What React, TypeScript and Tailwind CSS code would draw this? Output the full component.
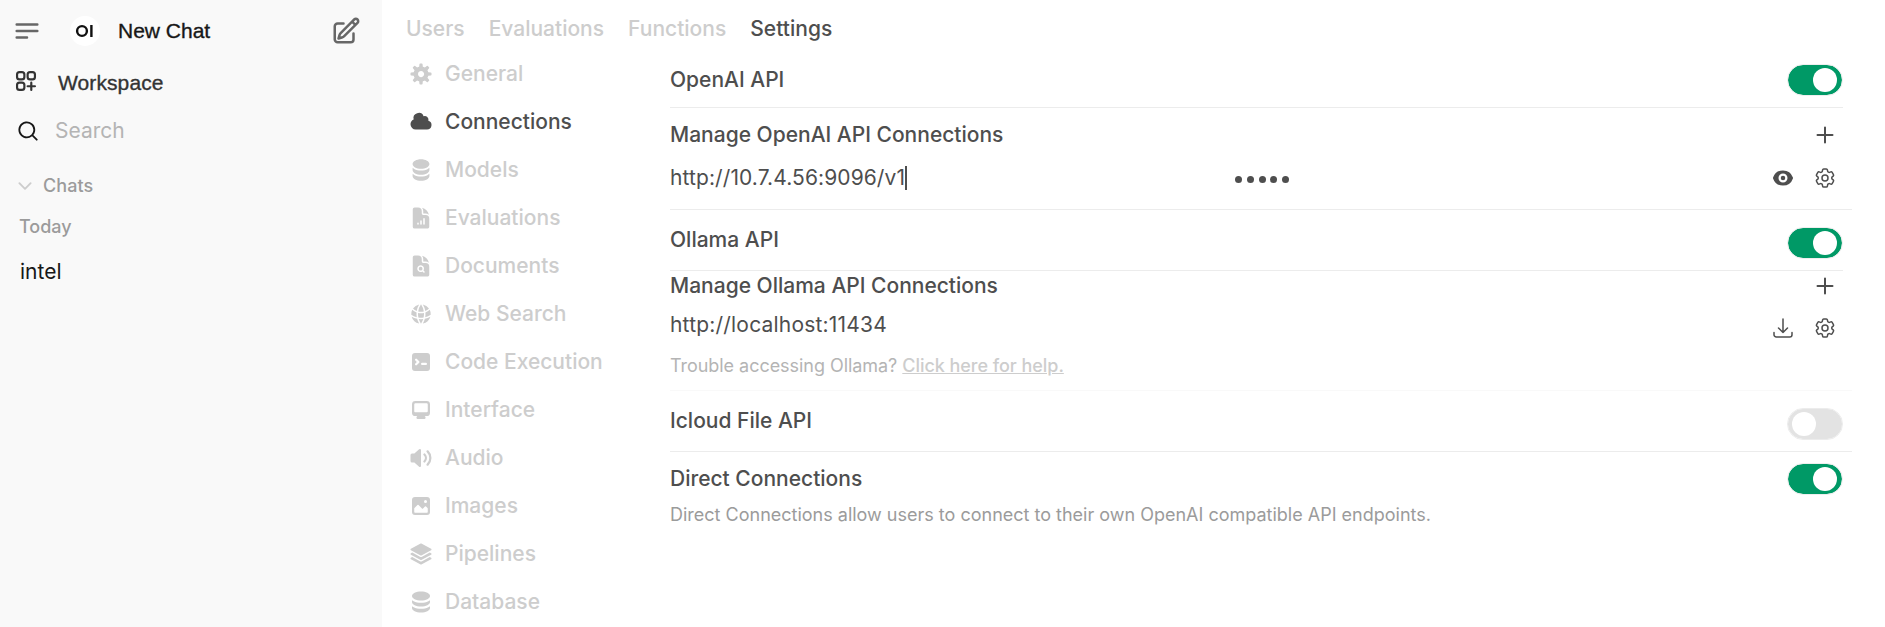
import type { ReactNode } from 'react';
import {
  HiDocumentChartBar,
  HiDocumentMagnifyingGlass,
  HiGlobeAlt,
  HiSquare3Stack3D,
  HiOutlineCog6Tooth,
  HiOutlineArrowDownTray,
} from 'react-icons/hi2';

function Solid({ box = 16, d }: { box?: number; d: string[] }) {
  return (
    <svg viewBox={`0 0 ${box} ${box}`} className="size-6 shrink-0" fill="currentColor">
      {d.map((p) => (
        <path key={p} d={p} fillRule="evenodd" clipRule="evenodd" />
      ))}
    </svg>
  );
}

function Line({ d, width, className }: { d: string; width: number; className: string }) {
  return (
    <svg
      viewBox="0 0 24 24"
      className={className}
      fill="none"
      stroke="currentColor"
      strokeWidth={width}
      strokeLinecap="round"
      strokeLinejoin="round"
    >
      <path d={d} />
    </svg>
  );
}

const gear = [
  'M6.955 1.45A.5.5 0 0 1 7.452 1h1.096a.5.5 0 0 1 .497.45l.17 1.699c.484.12.94.312 1.356.562l1.321-1.081a.5.5 0 0 1 .67.033l.774.775a.5.5 0 0 1 .034.67l-1.08 1.32c.25.417.44.873.561 1.357l1.699.17a.5.5 0 0 1 .45.497v1.096a.5.5 0 0 1-.45.497l-1.699.17c-.12.484-.312.94-.562 1.356l1.082 1.322a.5.5 0 0 1-.034.67l-.774.774a.5.5 0 0 1-.67.033l-1.322-1.08c-.416.25-.872.44-1.356.561l-.17 1.699a.5.5 0 0 1-.497.45H7.452a.5.5 0 0 1-.497-.45l-.17-1.699a4.973 4.973 0 0 1-1.356-.562L4.108 13.37a.5.5 0 0 1-.67-.033l-.774-.775a.5.5 0 0 1-.034-.67l1.08-1.32a4.971 4.971 0 0 1-.561-1.357l-1.699-.17A.5.5 0 0 1 1 8.548V7.452a.5.5 0 0 1 .45-.497l1.699-.17c.12-.484.312-.94.562-1.356L2.629 4.107a.5.5 0 0 1 .034-.67l.774-.774a.5.5 0 0 1 .67-.033L5.43 3.71a4.97 4.97 0 0 1 1.356-.561l.17-1.699ZM6 8c0 .538.212 1.026.558 1.385l.057.057a2 2 0 0 0 2.828-2.828l-.058-.056A2 2 0 0 0 6 8Z',
];
const cloud = [
  'M1 9.5A3.5 3.5 0 0 0 4.5 13H12a3 3 0 0 0 .917-5.857 2.503 2.503 0 0 0-3.198-3.019 3.5 3.5 0 0 0-6.628 2.171A3.5 3.5 0 0 0 1 9.5Z',
];
const stack20 = [
  'M10 1c3.866 0 7 1.79 7 4s-3.134 4-7 4-7-1.79-7-4 3.134-4 7-4zm5.694 8.13c.464-.264.91-.583 1.306-.952V10c0 2.21-3.134 4-7 4s-7-1.79-7-4V8.178c.396.37.842.688 1.306.953C5.838 10.006 7.854 10.5 10 10.5s4.162-.494 5.694-1.37zM3 13.179V15c0 2.21 3.134 4 7 4s7-1.79 7-4v-1.822c-.396.37-.842.688-1.306.953-1.532.875-3.548 1.369-5.694 1.369s-4.162-.494-5.694-1.37A7.009 7.009 0 013 13.179z',
];
const terminal = [
  'M2 4a2 2 0 0 1 2-2h8a2 2 0 0 1 2 2v8a2 2 0 0 1-2 2H4a2 2 0 0 1-2-2V4Zm2.22 1.97a.75.75 0 0 0 0 1.06l.97.97-.97.97a.75.75 0 1 0 1.06 1.06l1.5-1.5a.75.75 0 0 0 0-1.06l-1.5-1.5a.75.75 0 0 0-1.06 0ZM8.75 8.5a.75.75 0 0 0 0 1.5h2.5a.75.75 0 0 0 0-1.5h-2.5Z',
];
const desktop = [
  'M2 4.25A2.25 2.25 0 0 1 4.25 2h7.5A2.25 2.25 0 0 1 14 4.25v5.5A2.25 2.25 0 0 1 11.75 12h-1.312c.1.128.21.248.328.36a.75.75 0 0 1 .234.545v.345a.75.75 0 0 1-.75.75h-4.5a.75.75 0 0 1-.75-.75v-.345a.75.75 0 0 1 .234-.545c.118-.111.228-.232.328-.36H4.25A2.25 2.25 0 0 1 2 9.75v-5.5Zm2.25-.75a.75.75 0 0 0-.75.75v4.5c0 .414.336.75.75.75h7.5a.75.75 0 0 0 .75-.75v-4.5a.75.75 0 0 0-.75-.75h-7.5Z',
];
const speaker = [
  'M7.557 2.066A.75.75 0 0 1 8 2.75v10.5a.75.75 0 0 1-1.248.56L3.59 11H2a1 1 0 0 1-1-1V6a1 1 0 0 1 1-1h1.59l3.162-2.81a.75.75 0 0 1 .805-.124ZM12.95 3.05a.75.75 0 1 0-1.06 1.06 5.5 5.5 0 0 1 0 7.78.75.75 0 1 0 1.06 1.06 7 7 0 0 0 0-9.9Z',
  'M10.828 5.172a.75.75 0 1 0-1.06 1.06 2.5 2.5 0 0 1 0 3.536.75.75 0 1 0 1.06 1.06 4 4 0 0 0 0-5.656Z',
];
const photo = [
  'M2 4a2 2 0 0 1 2-2h8a2 2 0 0 1 2 2v8a2 2 0 0 1-2 2H4a2 2 0 0 1-2-2V4Zm10.5 5.707a.5.5 0 0 0-.146-.353l-1-1a.5.5 0 0 0-.708 0L9.354 9.646a.5.5 0 0 1-.708 0L6.354 7.354a.5.5 0 0 0-.708 0l-2 2a.5.5 0 0 0-.146.353V12a.5.5 0 0 0 .5.5h8a.5.5 0 0 0 .5-.5V9.707ZM12 5a1 1 0 1 1-2 0 1 1 0 0 1 2 0Z',
];
const stack16 = [
  'M8 7c3.314 0 6-1.343 6-3s-2.686-3-6-3-6 1.343-6 3 2.686 3 6 3Z',
  'M8 8.5c1.84 0 3.579-.37 4.914-1.037A6.33 6.33 0 0 0 14 6.78V8c0 1.657-2.686 3-6 3S2 9.657 2 8V6.78c.346.273.72.5 1.087.683C4.42 8.131 6.16 8.5 8 8.5Z',
  'M8 12.5c1.84 0 3.579-.37 4.914-1.037.366-.183.74-.41 1.086-.684V12c0 1.657-2.686 3-6 3s-6-1.343-6-3v-1.22c.346.273.72.5 1.087.683C4.42 12.131 6.16 12.5 8 12.5Z',
];
const eye = [
  'M8 9.5a1.5 1.5 0 1 0 0-3 1.5 1.5 0 0 0 0 3Z',
  'M1.38 8.28a.87.87 0 0 1 0-.566 7.003 7.003 0 0 1 13.238.006.87.87 0 0 1 0 .566A7.003 7.003 0 0 1 1.379 8.28ZM11 8a3 3 0 1 1-6 0 3 3 0 0 1 6 0Z',
];
const magnifier = [
  'M9 3.5a5.5 5.5 0 100 11 5.5 5.5 0 000-11zM2 9a7 7 0 1112.452 4.391l3.328 3.329a.75.75 0 11-1.06 1.06l-3.329-3.328A7 7 0 012 9z',
];

const sections: { label: string; icon: ReactNode }[] = [
  { label: 'General', icon: <Solid d={gear} /> },
  { label: 'Connections', icon: <Solid d={cloud} /> },
  { label: 'Models', icon: <Solid box={20} d={stack20} /> },
  { label: 'Evaluations', icon: <HiDocumentChartBar className="size-6" /> },
  { label: 'Documents', icon: <HiDocumentMagnifyingGlass className="size-6" /> },
  { label: 'Web Search', icon: <HiGlobeAlt className="size-6" /> },
  { label: 'Code Execution', icon: <Solid d={terminal} /> },
  { label: 'Interface', icon: <Solid d={desktop} /> },
  { label: 'Audio', icon: <Solid d={speaker} /> },
  { label: 'Images', icon: <Solid d={photo} /> },
  { label: 'Pipelines', icon: <HiSquare3Stack3D className="size-6" /> },
  { label: 'Database', icon: <Solid d={stack16} /> },
];

function Sidebar() {
  return (
    <aside className="flex w-[382px] shrink-0 flex-col bg-[#f9f9f9]">
      <div className="flex h-[62px] items-center pr-[21px] pl-3">
        <Line d="M3.75 6.75h16.5M3.75 12h16.5m-16.5 5.25H12" width={2} className="size-[30px] text-[#676767]" />
        <span className="ml-7 grid size-[30px] place-items-center rounded-full bg-white">
          <svg viewBox="0 0 30 30" className="size-[30px]" fill="none" stroke="#111" strokeWidth="2.4">
            <circle cx="12" cy="15" r="4.9" />
            <path d="M21.4 9v12" />
          </svg>
        </span>
        <span className="ml-[18px] flex-1 font-['Liberation_Sans',sans-serif] text-[21px] text-[#171717] [-webkit-text-stroke:0.35px_#171717]">
          New Chat
        </span>
        <Line
          d="m16.862 4.487 1.687-1.688a1.875 1.875 0 1 1 2.652 2.652L10.582 16.07a4.5 4.5 0 0 1-1.897 1.13L6 18l.8-2.685a4.5 4.5 0 0 1 1.13-1.897l8.932-8.931Zm0 0L19.5 7.125M18 14v4.75A2.25 2.25 0 0 1 15.75 21H5.25A2.25 2.25 0 0 1 3 18.75V8.25A2.25 2.25 0 0 1 5.25 6H10"
          width={2}
          className="size-[30px] text-[#676767]"
        />
      </div>
      <div className="flex h-[42px] items-center pl-[13px]">
        <Line
          d="M13.5 16.875h3.375m0 0h3.375m-3.375 0V13.5m0 3.375v3.375M6 10.5h2.25a2.25 2.25 0 0 0 2.25-2.25V6A2.25 2.25 0 0 0 8.25 3.75H6A2.25 2.25 0 0 0 3.75 6v2.25A2.25 2.25 0 0 0 6 10.5Zm0 9.75h2.25A2.25 2.25 0 0 0 10.5 18v-2.25a2.25 2.25 0 0 0-2.25-2.25H6a2.25 2.25 0 0 0-2.25 2.25V18A2.25 2.25 0 0 0 6 20.25Zm9.75-9.75H18a2.25 2.25 0 0 0 2.25-2.25V6A2.25 2.25 0 0 0 18 3.75h-2.25A2.25 2.25 0 0 0 13.5 6v2.25a2.25 2.25 0 0 0 2.25 2.25Z"
          width={2}
          className="mb-1 size-[26px] text-[#333]"
        />
        <span className="ml-[19px] font-['Liberation_Sans',sans-serif] text-[21px] tracking-[0.1px] text-[#333] [-webkit-text-stroke:0.35px_#333]">
          Workspace
        </span>
      </div>
      <div className="flex h-[54px] items-center pl-4 text-[#171717]">
        <Solid box={20} d={magnifier} />
        <span className="ml-[15px] text-[21px] text-[#b4b4b4]">Search</span>
      </div>
      <div className="flex h-14 items-center pl-4 text-[18px] leading-none font-medium text-[#9b9b9b]">
        <Line d="m19.5 8.25-7.5 7.5-7.5-7.5" width={2.5} className="size-[18px] text-[#cdcdcd]" />
        <span className="ml-[9px] tracking-[0.1px]">Chats</span>
      </div>
      <div className="flex h-[26px] items-center pl-[19px] text-[18px] leading-none font-medium text-[#9b9b9b]">
        Today
      </div>
      <div className="flex h-16 items-center pl-5 text-[21px] text-[#171717]">intel</div>
    </aside>
  );
}

function Toggle({ on }: { on: boolean }) {
  return (
    <span
      className={
        on
          ? 'mr-px flex h-[30px] w-[54px] items-center justify-end rounded-full bg-[#009966] px-[5px] outline outline-[#eee]'
          : 'mr-px flex h-[30px] w-[54px] items-center rounded-full bg-[#e3e3e3] px-1 outline outline-[#ececec]'
      }
    >
      <span className="size-6 rounded-full bg-white" />
    </span>
  );
}

function Plus() {
  return <Line d="M12 4.5v15m7.5-7.5h-15" width={2} className="mr-1.5 size-6" />;
}

function Connections() {
  return (
    <div className="flex w-[1182px] flex-col pt-[53px] text-[21px] font-medium text-[#4e4e4e]">
      <div className="flex h-[54px] w-[1173px] items-center justify-between">
        OpenAI API
        <Toggle on />
      </div>
      <hr className="w-[1173px] border-[#ececec]" />
      <div className="flex h-[54px] w-[1173px] items-center justify-between">
        Manage OpenAI API Connections
        <Plus />
      </div>
      <div className="flex h-8 w-[1173px] items-center font-normal">
        <span className="flex w-[565px] items-center tracking-[0.1px]">
          http://10.7.4.56:9096/v1
          <span className="h-6 w-0.5 bg-[#4e4e4e]" />
        </span>
        <span className="flex flex-1 gap-[4.8px] pt-0.5">
          <span className="size-[7px] rounded-full bg-[#4e4e4e]" />
          <span className="size-[7px] rounded-full bg-[#4e4e4e]" />
          <span className="size-[7px] rounded-full bg-[#4e4e4e]" />
          <span className="size-[7px] rounded-full bg-[#4e4e4e]" />
          <span className="size-[7px] rounded-full bg-[#4e4e4e]" />
        </span>
        <span className="flex gap-[18px] pr-1.5">
          <Solid d={eye} />
          <HiOutlineCog6Tooth className="size-6" />
        </span>
      </div>
      <hr className="mt-[15px] border-[#ececec]" />
      <div className="flex h-[60px] w-[1173px] items-center justify-between">
        Ollama API
        <span className="pt-1.5">
          <Toggle on />
        </span>
      </div>
      <hr className="w-[1173px] border-[#ececec]" />
      <div className="flex h-[30px] w-[1173px] items-center justify-between">
        Manage Ollama API Connections
        <Plus />
      </div>
      <div className="flex h-12 w-[1173px] items-center justify-between font-normal">
        <span className="tracking-[0.2px]">http://localhost:11434</span>
        <span className="flex gap-[18px] pt-1.5 pr-1.5">
          <HiOutlineArrowDownTray className="size-6" />
          <HiOutlineCog6Tooth className="size-6" />
        </span>
      </div>
      <div className="flex h-[34px] items-center text-[18px] leading-none font-normal tracking-[-0.045px] whitespace-pre text-[#b4b4b4]">
        Trouble accessing Ollama?{' '}
        <a className="font-medium text-[#cdcdcd] underline">Click here for help.</a>
      </div>
      <hr className="mt-[7px] border-[#f9f9f9]" />
      <div className="flex h-[60px] w-[1173px] items-center justify-between">
        Icloud File API
        <span className="pt-1.5">
          <Toggle on={false} />
        </span>
      </div>
      <hr className="border-[#ececec]" />
      <div className="flex h-[54px] w-[1173px] items-center justify-between">
        Direct Connections
        <Toggle on />
      </div>
      <div className="flex h-[18px] items-center text-[18px] leading-none font-normal text-[#9b9b9b]">
        Direct Connections allow users to connect to their own OpenAI compatible API endpoints.
      </div>
    </div>
  );
}

export default function App() {
  return (
    <div className="flex h-[627px] w-[1885px] overflow-hidden bg-white font-['Inter',sans-serif] leading-[22px]">
      <Sidebar />
      <div className="flex w-[288px] shrink-0 flex-col pl-6">
        <nav className="flex h-[50px] w-[450px] items-center gap-6 pt-2 text-[21px] font-medium text-[#cdcdcd]">
          <span>Users</span>
          <span>Evaluations</span>
          <span>Functions</span>
          <span className="tracking-[0.05px] text-[#4e4e4e]">Settings</span>
        </nav>
        <ul className="flex flex-col pl-[3px]">
          {sections.map((s) => (
            <li
              key={s.label}
              className={
                s.label === 'Connections'
                  ? 'flex h-12 items-center gap-3 text-[21px] font-medium text-[#4e4e4e]'
                  : 'flex h-12 items-center gap-3 text-[21px] font-medium text-[#cdcdcd]'
              }
            >
              {s.icon}
              {s.label}
            </li>
          ))}
        </ul>
      </div>
      <Connections />
    </div>
  );
}
